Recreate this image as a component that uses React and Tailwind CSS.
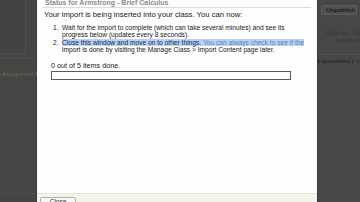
import React from "react";

export default function App() {
  const font = { fontFamily: '"Liberation Sans", Arial, sans-serif' };
  return (
    <div
      className="w-[360px] h-[202px] overflow-hidden flex bg-[#464646]"
      style={font}
    >
      {/* left dimmed page */}
      <div className="w-[37px] shrink-0 flex flex-col bg-[#454545] border-r border-[#3a3a3a]">
        <div className="h-[54px] w-[26px] border-r border-b border-[#515151] bg-[#434343]" />
        <div className="mt-[4px] h-px w-[34px] bg-[#505050]" />
        <div className="mt-[11px] text-[6px] leading-[8px] whitespace-nowrap text-[#6a6a4c] -ml-[2px]">
          y Assignment fo
        </div>
        <div className="mt-auto mb-[8px] h-px w-full bg-[#4d4d4d]" />
      </div>

      {/* dialog */}
      <div className="w-[280px] shrink-0 bg-[#fdfdfd] flex flex-col">
        <div className="mx-[6px] h-[8px] border-b border-[#dcdcdc] flex items-start">
          <div className="pl-[2px] -mt-[2px] text-[7px] leading-[9px] font-bold text-[#8c8c8c] whitespace-nowrap">
            Status for Armstrong - Brief Calculus
          </div>
        </div>
        <div className="pl-[7px] pt-[2px] text-[7.7px] leading-[9px] text-[#1a1a1a] whitespace-nowrap">
          Your import is being inserted into your class. You can now:
        </div>
        <ol className="mt-[6px] pl-[16px] pr-[4px] text-[6.65px] leading-[6.6px] text-[#222]">
          <li className="flex">
            <span className="w-[9px] shrink-0">1.</span>
            <span className="whitespace-nowrap">
              Wait for the import to complete (which can take several minutes) and see its
              <br />
              progress below (updates every 8 seconds).
            </span>
          </li>
          <li className="flex mt-[1.8px]">
            <span className="w-[9px] shrink-0">2.</span>
            <span className="whitespace-nowrap">
              <span className="bg-[#b9d3f2] text-[#1a2248]">
                Close this window and move on to other things.{" "}
              </span>
              <span className="bg-[#b9d3f2] text-[#5a80c8]">
                You can always check to see if the
              </span>
              <br />
              import is done by visiting the Manage Class &gt; Import Content page later.
            </span>
          </li>
        </ol>
        <div className="pl-[14px] mt-[9px] text-[7.2px] leading-[8px] text-[#222]">
          0 out of 5 items done.
        </div>
        <div className="ml-[14px] mt-[1px] w-[240px] h-[9px] border border-[#5a5a5a] bg-white" />
        <div className="mt-auto h-[9px] bg-[#f3f5ea] border-t border-[#e4e7d8] pl-[3px] pt-[3px]">
          <div className="w-[36px] h-[10px] rounded-[2px] border border-[#b0b0b0] bg-[#f6f6f6] text-[6.5px] leading-[8px] text-center text-[#333]">
            Close
          </div>
        </div>
      </div>

      {/* right dimmed page */}
      <div className="flex-1 flex flex-col bg-[#474747] border-l border-[#3c3c3c]">
        <div className="mt-[5px] ml-[3px] w-[36px] h-[10px] rounded-[2px] border border-[#5c5c5c] bg-[#515151] flex items-center gap-[2px] px-[2px]">
          <div className="w-[3px] h-[5px] bg-[#6a5a3c] rounded-[1px]" />
          <span className="text-[6px] leading-[8px] font-bold text-[#1e1e1e] whitespace-nowrap">
            Unpublish
          </span>
        </div>
        <div className="mt-[15px] ml-[8px] text-[6px] leading-[7px] text-[#353535] whitespace-nowrap">
          Click the "Ad
          <br />
          <span className="ml-[10px]">button to</span>
        </div>
        <div className="mt-[10px] h-px w-full bg-[#525252]" />
        <div className="mt-[2px] text-[6px] leading-[8px] font-bold text-[#2a2a2a] whitespace-nowrap -ml-[1px]">
          k questions | &nbsp;t
        </div>
      </div>
    </div>
  );
}
